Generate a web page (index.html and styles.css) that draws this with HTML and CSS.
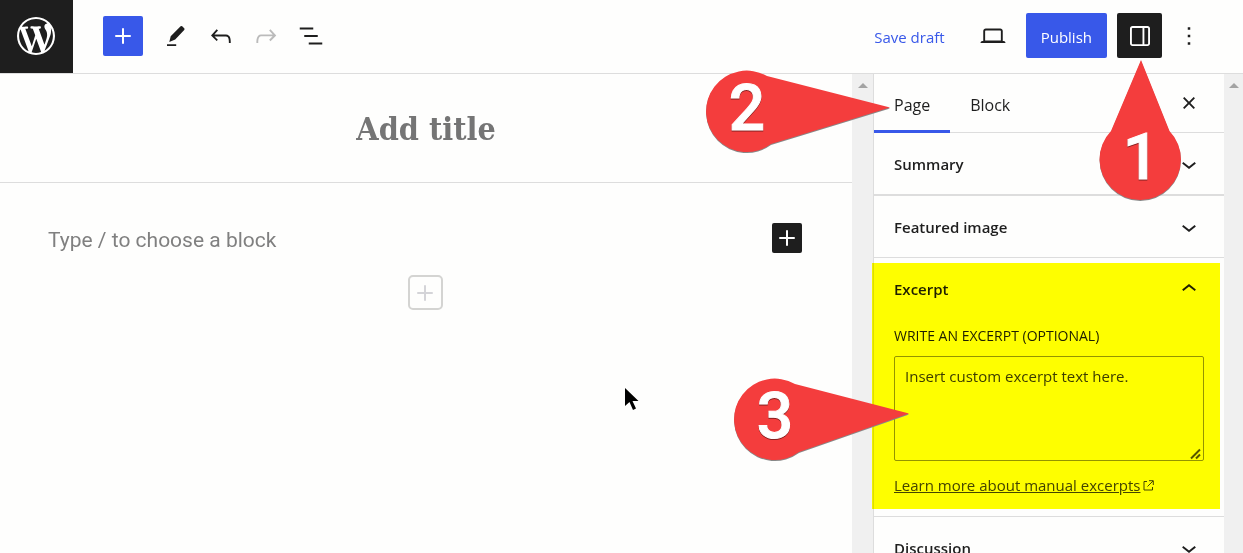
FILE: index.html
```html
<!DOCTYPE html>
<html lang="en">
<head>
<meta charset="utf-8">
<title>Add New Page</title>
<link rel="stylesheet" href="styles.css">
</head>
<body>
<div class="app">
  <header class="topbar">
    <a class="logo" href="#" aria-label="View pages">
      <svg width="38" height="38" viewBox="0 0 20 20"><path d="M20 10c0-5.51-4.49-10-10-10C4.48 0 0 4.49 0 10c0 5.52 4.48 10 10 10 5.51 0 10-4.48 10-10zM7.78 15.37L4.37 6.22c.55-.02 1.17-.08 1.17-.08.5-.06.44-1.13-.06-1.11 0 0-1.45.11-2.37.11-.18 0-.37 0-.58-.01C4.12 2.69 6.87 1.11 10 1.11c2.33 0 4.45.87 6.05 2.34-.68-.11-1.65.39-1.65 1.58 0 .74.45 1.36.9 2.1.35.61.55 1.36.55 2.46 0 1.49-1.4 5-1.4 5l-3.03-8.37c.54-.02.82-.17.82-.17.5-.05.44-1.25-.06-1.22 0 0-1.44.12-2.38.12-.87 0-2.33-.12-2.33-.12-.5-.03-.56 1.2-.06 1.22l.92.08 1.26 3.41zM17.41 10c.24-.64.74-1.87.43-4.25.7 1.29 1.05 2.71 1.05 4.25 0 3.29-1.73 6.24-4.4 7.78.97-2.59 1.94-5.2 2.92-7.78zM6.1 18.09C3.12 16.65 1.11 13.53 1.11 10c0-1.3.23-2.48.72-3.59C3.25 10.3 4.67 14.2 6.1 18.09zm4.03-6.63l2.58 6.98c-.86.29-1.76.45-2.71.45-.79 0-1.57-.11-2.29-.33.81-2.38 1.62-4.74 2.42-7.1z"/></svg>
    </a>
    <div class="tools">
      <button class="btn insert" aria-label="Toggle block inserter"><svg class="icon" viewBox="0 0 24 24"><path d="M18.2 11.2h-5.4V5.8h-1.6v5.4H5.8v1.6h5.4v5.4h1.6v-5.4h5.4z"/></svg></button>
      <div class="toolset">
        <button class="btn square" aria-label="Tools"><svg class="icon" viewBox="0 0 30 30"><path d="M6 23.2h9.200v1.800H6zM19.600 5.300q.8-.8 1.600 0l2 2q.8.8 0 1.600L14.200 18.600 8.300 20.900l1.400-5.700z"/></svg></button>
        <button class="btn square" aria-label="Undo"><svg class="icon" viewBox="0 0 24 24"><path d="M18.3 11.7c-.6-.6-1.4-.9-2.3-.9H6.700l2.900-3.300-1.100-1-4.500 5L8.500 16l1-1-2.700-2.700H16c.5 0 .9.2 1.300.5 1 1 1 3.400 1 4.500v.3h1.500v-.2c0-1.500 0-4.300-1.500-5.700z"/></svg></button>
        <button class="btn square" aria-label="Redo" disabled><svg class="icon" viewBox="0 0 24 24"><path d="M15.600 6.500l-1.100 1 2.900 3.300H8c-.9 0-1.700.3-2.300.9-1.400 1.500-1.400 4.200-1.400 5.600v.2h1.500v-.3c0-1.100 0-3.500 1-4.500.3-.3.7-.5 1.300-.5h9.200L14.500 15l1.100 1.100 4.600-4.600-4.600-5z"/></svg></button>
        <button class="btn square" aria-label="Document overview"><svg class="icon" viewBox="0 0 24 24"><path d="M13.800 5.200H3v1.500h10.800V5.200zm-3.600 12v1.500H21v-1.500H10.200zm7.200-6H6.600v1.500h10.800v-1.500z"/></svg></button>
      </div>
    </div>
    <div class="actions">
      <button class="btn save">Save draft</button>
      <button class="btn square" aria-label="Preview"><svg class="icon" viewBox="0 0 24 24"><path d="M20.500 16h-.7V8c0-1.100-.9-2-2-2H6.200c-1.100 0-2 .9-2 2v8h-.7c-.8 0-1.500.7-1.500 1.500h20c0-.8-.7-1.500-1.500-1.500zM5.700 8c0-.3.2-.5.5-.5h11.600c.3 0 .5.2.5.5v7.600H5.700V8z"/></svg></button>
      <button class="btn publish">Publish</button>
      <button class="btn square dark" aria-label="Settings" aria-pressed="true"><svg class="icon" viewBox="0 0 24 24"><path d="M18 4H6c-1.100 0-2 .9-2 2v12c0 1.100.9 2 2 2h12c1.100 0 2-.9 2-2V6c0-1.100-.9-2-2-2zm-4 14.500H6c-.3 0-.5-.2-.5-.5V6c0-.3.2-.5.5-.5h8v13zm4.500-.5c0 .3-.2.5-.5.5h-2.500v-13H18c.3 0 .5.2.5.5v12z"/></svg></button>
      <button class="btn more" aria-label="Options"><svg class="icon" viewBox="0 0 24 24"><path d="M13 19h-2v-2h2v2zm0-6h-2v-2h2v2zm0-6h-2V5h2v2z"/></svg></button>
    </div>
  </header>

  <div class="body">
    <main class="editor">
      <h1 class="title">Add title</h1>
      <div class="content">
        <div class="block">
          <p class="prompt">Type / to choose a block</p>
          <button class="btn add" aria-label="Add block"><svg class="icon" viewBox="0 0 24 24"><path d="M18.200 11.200h-5.400V5.800h-1.600v5.400H5.800v1.600h5.400v5.400h1.600v-5.400h5.400z"/></svg></button>
        </div>
        <button class="btn ghost" aria-label="Append block"><svg class="icon" viewBox="0 0 24 24"><path d="M18.200 11.200h-5.400V5.800h-1.600v5.400H5.800v1.600h5.400v5.400h1.600v-5.400h5.400z"/></svg></button>
      </div>
    </main>
    <div class="track"><span class="arrow"></span></div>

    <aside class="sidebar">
      <div class="tabs">
        <button class="tab active">Page</button>
        <button class="tab">Block</button>
        <button class="btn close" aria-label="Close settings"><svg class="icon" viewBox="0 0 24 24"><path d="M12 13.060l3.712 3.713 1.061-1.060L13.061 12l3.712-3.712-1.060-1.060L12 10.938 8.288 7.227l-1.061 1.060L10.939 12l-3.712 3.712 1.060 1.061L12 13.061z"/></svg></button>
      </div>
      <section class="panel first">
        <button class="toggle">Summary<svg class="icon" viewBox="0 0 24 24"><path d="M17.500 11.600L12 16l-5.500-4.400.9-1.200L12 14l4.500-3.600 1 1.200z"/></svg></button>
      </section>
      <section class="panel">
        <button class="toggle">Featured image<svg class="icon" viewBox="0 0 24 24"><path d="M17.500 11.600L12 16l-5.500-4.400.9-1.200L12 14l4.500-3.600 1 1.200z"/></svg></button>
      </section>
      <section class="panel excerpt">
        <button class="toggle" aria-expanded="true">Excerpt<svg class="icon" viewBox="0 0 24 24"><path d="M6.500 12.400L12 8l5.500 4.400-.9 1.200L12 10l-4.500 3.600-1-1.200z"/></svg></button>
        <div class="fields">
          <label class="label" for="excerpt">Write an excerpt (optional)</label>
          <div class="box">
            <textarea class="area" id="excerpt">Insert custom excerpt text here.</textarea>
            <svg class="grip" width="12" height="12" viewBox="0 0 12 12"><path d="M1 10.500L10 1.500M6 10.500l4-4"/></svg>
          </div>
          <a class="learn" href="#"><span class="learn-text">Learn more about manual excerpts</span><svg width="11" height="11" viewBox="0 0 11 11"><path d="M4 1.500H1v8.500h8.500V7M6 .7h4.300V5M10 1L4.500 6.500"/></svg></a>
        </div>
      </section>
      <section class="panel">
        <button class="toggle">Discussion<svg class="icon" viewBox="0 0 24 24"><path d="M17.500 11.600L12 16l-5.500-4.400.9-1.200L12 14l4.500-3.600 1 1.200z"/></svg></button>
      </section>
    </aside>
    <div class="track outer"><span class="arrow"></span></div>
  </div>

  <svg class="callout one" width="84" height="146" viewBox="0 0 84 146"><path d="M43 2L71.500 73A40.700 40.700 0 1 1 13 73Z"/><text x="43" y="121">1</text></svg>
  <svg class="callout two" width="186" height="86" viewBox="0 0 186 86"><path d="M184 38.500L61 7A40.700 40.700 0 1 0 65 75Z"/><text x="41" y="61">2</text></svg>
  <svg class="callout three" width="176" height="86" viewBox="0 0 176 86"><path d="M175 36.500L61 7A40.700 40.700 0 1 0 65 75Z"/><text x="41" y="61">3</text></svg>
  <svg class="cursor" width="14" height="23" viewBox="0 0 14 23"><path d="M0 0V18L4.500 14 8 22l3-1.500L7.500 13H13.500Z"/></svg>
</div>
</body>
</html>
```
FILE: styles.css
```css
* { box-sizing: border-box; }

body {
  margin: 0;
  background: #fefefd;
  color: #1e1e1e;
  font: 15px/20px "Open Sans", "Noto Sans", sans-serif;
}

button, textarea { font: inherit; color: inherit; }

.app {
  position: relative;
  display: flex;
  flex-direction: column;
  height: 100vh;
  overflow: hidden;
}

.icon { width: 30px; height: 30px; fill: currentColor; flex: none; }

.btn {
  display: flex;
  align-items: center;
  justify-content: center;
  padding: 0;
  border: 0;
  border-radius: 2px;
  background: none;
}
.btn:disabled { color: #bbb; }

/* Top bar */
.topbar {
  display: flex;
  flex: none;
  align-items: center;
  border-bottom: 1px solid #dddddd;
}
.logo {
  display: flex;
  align-items: center;
  justify-content: center;
  width: 73px;
  height: 73px;
  padding: 0 2px 2px 0;
  background: #1e1e1e;
  fill: #fff;
}
.tools { display: flex; align-items: center; gap: 10px; margin-left: 30px; padding-bottom: 2px; }
.toolset { display: flex; }
.square { width: 45px; height: 45px; }
.insert { width: 40px; height: 40px; background: #3858e9; color: #fff; }
.actions { display: flex; align-items: center; gap: 10px; margin-left: auto; padding: 0 37px 2px 0; }
.save { padding: 2px 16px 0; color: #3858e9; }
.publish { height: 45px; padding: 2px 15px 0; background: #3858e9; color: #fff; }
.dark { background: #1e1e1e; color: #fff; }
.more { width: 34px; height: 45px; }

/* Editor */
.body { display: flex; flex: 1; min-height: 0; }
.editor { flex: 1; min-width: 0; }
.title {
  margin: 0;
  padding: 33px 0 31px;
  border-bottom: 1px solid #dddddd;
  color: #757575;
  font: bold 32px/44px "DejaVu Serif Condensed", "DejaVu Serif", serif;
  text-align: center;
}
.content { display: flex; flex-direction: column; align-items: center; gap: 20px; padding: 40px 50px 0 48px; }
.block { display: flex; align-items: flex-start; justify-content: space-between; width: 100%; }
.prompt { margin: 0; padding-top: 2px; color: #808080; font: 21px/30px Roboto, sans-serif; }
.add { width: 30px; height: 30px; background: #1e1e1e; color: #fff; }
.ghost { width: 35px; height: 35px; border: 2px solid #d4d4d2; border-radius: 5px; color: #d4d4d8; }

.track { display: flex; justify-content: center; width: 21px; padding-top: 9px; background: #f0f0f0; }
.outer { width: 19px; }
.arrow {
  width: 0;
  height: 0;
  border: 5px solid transparent;
  border-top: 0;
  border-bottom-color: #a3a3a3;
}

/* Settings sidebar */
.sidebar { width: 351px; border-left: 1px solid #dddddd; }
.tabs { display: flex; height: 59px; padding-right: 20px; border-bottom: 1px solid #dddddd; }
.tab {
  height: 59px;
  padding: 2px 20px 0;
  border: 0;
  background: none;
  font-size: 16px;
  font-weight: 500;
}
.active { box-shadow: inset 0 -3px #3858e9; }
.close { width: 30px; margin-left: auto; }
.panel { border-bottom: 1px solid #dddddd; }
.first { border-bottom-width: 2px; }
.toggle {
  display: flex;
  align-items: center;
  justify-content: space-between;
  width: 100%;
  padding: 16px 20px 15px;
  border: 0;
  background: none;
  font-weight: 600;
  text-align: left;
}
.excerpt { position: relative; }
.excerpt::after {
  content: "";
  position: absolute;
  inset: 5px 4px 7px -2px;
  background: #ffff00;
  mix-blend-mode: multiply;
  pointer-events: none;
}
.fields { display: flex; flex-direction: column; align-items: flex-start; padding: 7px 20px 21px; }
.label { margin-bottom: 10px; font-size: 14px; font-weight: 500; text-transform: uppercase; }
.box { position: relative; display: flex; width: 100%; }
.area {
  flex: 1;
  height: 105px;
  padding: 9px 10px;
  border: 1px solid #949494;
  border-radius: 2px;
  background: none;
  color: #3c3c3c;
  resize: none;
}
.grip { position: absolute; right: 2px; bottom: 1px; fill: none; stroke: #555; stroke-width: 2; }
.learn { display: flex; align-items: center; gap: 3px; margin-top: 14px; color: #444; text-decoration: none; }
.learn-text { text-decoration: underline; }
.learn svg { fill: none; stroke: #444; stroke-width: 1; }

/* Numbered callouts and pointer */
.callout {
  position: absolute;
  fill: #f43d3d;
  filter: drop-shadow(0 1px 0 #888);
}
.callout text {
  fill: #fff;
  font: 500 64px Roboto, sans-serif;
  text-anchor: middle;
  stroke: #fff;
  stroke-width: 1;
  filter: drop-shadow(0 1px 0 #822);
}
.one { top: 58px; right: 61px; }
.two { top: 69px; right: 351px; }
.three { top: 377px; right: 333px; }
.cursor { position: absolute; top: 388px; left: 625px; }
```
